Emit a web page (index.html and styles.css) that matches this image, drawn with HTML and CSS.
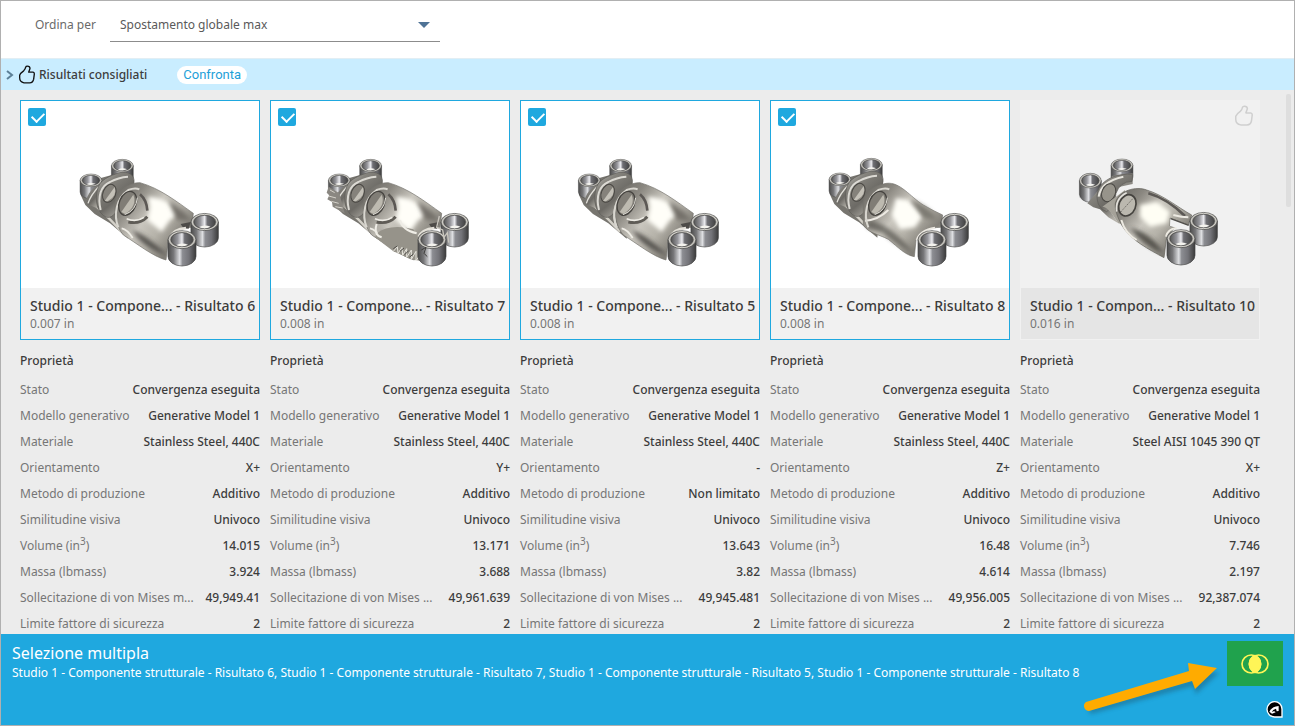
FILE: index.html
```
<!DOCTYPE html>
<html lang="it">
<head>
<meta charset="UTF-8">
<title>Risultati</title>
<link rel="stylesheet" href="styles.css">
</head>
<body>
<!-- shared shapes for the part previews -->
<svg class="defs" width="0" height="0" aria-hidden="true">
  <defs>
    <linearGradient id="side">
      <stop offset="0" stop-color="#4c4c4c"/><stop offset=".2" stop-color="#777779"/><stop offset=".42" stop-color="#dedfe2"/>
      <stop offset=".52" stop-color="#8c8d92"/><stop offset=".75" stop-color="#737378"/><stop offset="1" stop-color="#3b3b3b"/>
    </linearGradient>
    <linearGradient id="bore">
      <stop offset="0" stop-color="#555"/><stop offset=".3" stop-color="#96969b"/><stop offset=".5" stop-color="#ececf0"/>
      <stop offset=".62" stop-color="#6f6f74"/><stop offset="1" stop-color="#444"/>
    </linearGradient>
    <linearGradient id="metal" x1="0" y1=".1" x2="1" y2=".9">
      <stop offset="0" stop-color="#6c6a65"/><stop offset=".2" stop-color="#8b8881"/><stop offset=".42" stop-color="#c9c6be"/>
      <stop offset=".6" stop-color="#b5b2a9"/><stop offset=".8" stop-color="#827f78"/><stop offset="1" stop-color="#b9b6ae"/>
    </linearGradient>
    <linearGradient id="lobe" x1="0" y1="0" x2=".7" y2="1">
      <stop offset="0" stop-color="#c9c7c1"/><stop offset=".3" stop-color="#84827c"/><stop offset=".65" stop-color="#6c6a65"/><stop offset="1" stop-color="#b5b2aa"/>
    </linearGradient>
    <filter id="soft" x="-30%" y="-30%" width="160%" height="160%"><feGaussianBlur stdDeviation="7"/></filter>
    <filter id="soft2" x="-30%" y="-30%" width="160%" height="160%"><feGaussianBlur stdDeviation="2"/></filter>
    <g id="cup">
      <path d="M-42 0V50A42 29 0 0 0 42 50V0Z" fill="url(#side)" stroke="#444" stroke-width="2"/>
      <ellipse rx="42" ry="27" fill="#9b9994" stroke="#4a4a48" stroke-width="2"/>
      <ellipse rx="38" ry="24" fill="none" stroke="#d5d3cd" stroke-width="3"/>
      <ellipse rx="33" ry="21" fill="url(#bore)" stroke="#3e3e3e" stroke-width="2"/>
      <path d="M-17 16Q0 7 18 15Q0 24-17 16Z" fill="#f4f3ee"/>
    </g>
    <g id="rear">
      <use href="#cup" transform="translate(187 77) scale(.78 .7)"/>
      <path d="M62 128L62 165L76 195L104 222L150 250L205 296L222 130L216 105L155 105L120 115Z" fill="#77756f"/>
      <path d="M110 200L150 238L185 275" fill="none" stroke="#d3d0c8" stroke-width="7" filter="url(#soft2)"/>
      <use href="#cup" transform="translate(93 121) scale(.78 .7)"/>
      <path d="M76 190C82 160 98 142 124 130L118 208Z" fill="url(#lobe)"/>
      <path d="M84 190Q92 165 116 140" fill="none" stroke="#e2e0da" stroke-width="4"/>
      <path d="M112 150C118 118 150 108 178 98C205 92 225 105 222 128C220 148 185 160 175 190C172 215 160 235 140 232C110 220 105 180 112 150Z" fill="url(#lobe)" stroke="#5c5a56" stroke-width="2"/>
      <path d="M122 210C112 170 122 138 150 126Q175 112 204 110" fill="none" stroke="#dcdad4" stroke-width="6" filter="url(#soft2)"/>
      <ellipse cx="148" cy="160" rx="19" ry="28" transform="rotate(22 148 160)" fill="#85827b" stroke="#494743" stroke-width="3"/>
      <path d="M134 183L164 141Q173 168 143 184Z" fill="#c4c1b8"/>
    </g>
    <g id="eye">
      <path d="M175 262C160 225 168 175 205 150Q225 142 238 148" fill="none" stroke="#d9d7d0" stroke-width="6" filter="url(#soft2)"/>
      <ellipse cx="203" cy="190" rx="25" ry="37" transform="rotate(22 203 190)" fill="#807d76" stroke="#45433f" stroke-width="4"/>
      <path d="M184 216L220 164Q233 198 195 222Z" fill="#bdbab0"/>
      <path d="M194 224Q229 211 232 173" fill="none" stroke="#dfddd6" stroke-width="3"/>
    </g>
    <g id="fronts">
      <use href="#cup" transform="translate(434 246) scale(.98 .95)"/>
      <use href="#cup" transform="translate(366 299)"/>
    </g>
    <g id="body">
      <path d="M165 190C170 150 205 128 240 128C300 145 350 185 400 220L395 262C370 262 340 275 325 300L318 360C280 350 230 310 190 285C168 260 163 220 165 190Z" fill="url(#metal)" stroke="#74726d" stroke-width="2"/>
      <path d="M264 170Q330 175 360 220L330 240L305 275L262 240L270 205Z" fill="#fffef8" filter="url(#soft)"/>
      <path d="M215 270Q260 285 320 345Q250 325 215 270Z" fill="#3f3d3a" opacity=".8" filter="url(#soft)"/>
      <path d="M325 182Q370 205 392 242L350 240Z" fill="#74716a" filter="url(#soft)"/>
      <path d="M205 246Q240 253 262 230" fill="none" stroke="#5e5b56" stroke-width="9" filter="url(#soft2)"/>
      <path d="M200 236Q228 248 252 232M185 265Q202 268 218 294" fill="none" stroke="#eeece5" stroke-width="5" filter="url(#soft2)"/>
      <path d="M240 163Q260 180 262 212" fill="none" stroke="#5c5954" stroke-width="8" filter="url(#soft2)"/>
      <path d="M362 252L392 246L386 266L370 264Z" fill="#4d4b48"/>
      <path d="M328 294Q340 267 378 264" fill="none" stroke="#e3e0d8" stroke-width="7" filter="url(#soft2)"/>
    </g>
    <path id="thumb" d="M83 199Q91 199 91 206L87 217H100Q104 218 104 222L102 238Q100 249 90 249H73Q60 247 60 234V226Q62 220 72 213Q77 208 78 202Q79 199 83 199Z" fill="none" stroke="currentColor" stroke-width="4" stroke-linejoin="round"/>
  </defs>
</svg>

<header class="topbar">
  <label for="sort">Ordina per</label>
  <div class="select">
    <select id="sort"><option>Spostamento globale max</option></select>
    <svg class="arrow" width="12" height="6" viewBox="0 0 12 6"><path d="M0 0H12L6 6Z" fill="#4f7396"/></svg>
  </div>
</header>

<div class="banner">
  <svg class="chevron" width="8" height="12" viewBox="0 0 8 12"><path d="M1 2L6 6L1 10" fill="none" stroke="#5b7f96" stroke-width="2"/></svg>
  <svg class="thumb" width="16" height="19" viewBox="58 196 48 56"><use href="#thumb"/></svg>
  <h2>Risultati consigliati</h2>
  <button class="compare" type="button">Confronta</button>
</div>

<main class="results">
  <section class="result">
    <div class="card selected">
      <input type="checkbox" aria-label="Risultato 6" checked>
      <svg class="part" viewBox="-117 -117 714 561">
        <use href="#rear"/><use href="#body"/><use href="#eye"/><use href="#fronts"/>
      </svg>
      <div class="caption">
        <h3>Studio 1 - Compone... - Risultato 6</h3>
        <p>0.007 in</p>
      </div>
    </div>
    <h4>Proprietà</h4>
    <table>
      <tr><th>Stato</th><td>Convergenza eseguita</td></tr>
      <tr><th>Modello generativo</th><td>Generative Model 1</td></tr>
      <tr><th>Materiale</th><td>Stainless Steel, 440C</td></tr>
      <tr><th>Orientamento</th><td>X+</td></tr>
      <tr><th>Metodo di produzione</th><td>Additivo</td></tr>
      <tr><th>Similitudine visiva</th><td>Univoco</td></tr>
      <tr><th>Volume (in<sup>3</sup>)</th><td>14.015</td></tr>
      <tr><th>Massa (lbmass)</th><td>3.924</td></tr>
      <tr><th>Sollecitazione di von Mises m...</th><td>49,949.41</td></tr>
      <tr><th>Limite fattore di sicurezza</th><td>2</td></tr>
    </table>
  </section>

  <section class="result">
    <div class="card selected">
      <input type="checkbox" aria-label="Risultato 7" checked>
      <svg class="part" viewBox="-117 -117 714 561">
        <g transform="translate(-5 0)"><use href="#rear"/></g>
        <path d="M56 140L50 158L58 166L52 178L66 186L68 200L92 214L104 220L88 160Z" fill="#8a8781"/>
        <path d="M60 150L74 158M56 168L78 174M64 184L86 190M76 200L98 204" stroke="#d6d3cb" stroke-width="3"/>
        <g transform="translate(-5 0)"><use href="#body"/><use href="#eye"/></g>
        <path d="M200 280Q240 250 310 268L330 300L328 362L300 356L250 334L195 292Z" fill="#96938a" filter="url(#soft2)"/>
        <path d="M250 334L262 320L264 340L276 322L278 346L290 326L290 352L304 330L304 358L318 334L318 362L334 340" fill="none" stroke="#e6e4dc" stroke-width="3"/>
        <path d="M250 326L262 318M270 334L282 324M284 344L296 332M298 352L310 342" stroke="#4f4d49" stroke-width="3"/>
        <path d="M200 252Q190 285 215 292M270 240Q276 270 320 280" fill="none" stroke="#efede6" stroke-width="6" filter="url(#soft2)"/>
        <use href="#fronts"/>
        <path d="M388 228L380 262L398 270L402 292L412 278L416 308" fill="none" stroke="#c9c6be" stroke-width="4"/>
        <path d="M334 330L348 322L342 340L352 350" fill="none" stroke="#3e3d3b" stroke-width="3"/>
      </svg>
      <div class="caption">
        <h3>Studio 1 - Compone... - Risultato 7</h3>
        <p>0.008 in</p>
      </div>
    </div>
    <h4>Proprietà</h4>
    <table>
      <tr><th>Stato</th><td>Convergenza eseguita</td></tr>
      <tr><th>Modello generativo</th><td>Generative Model 1</td></tr>
      <tr><th>Materiale</th><td>Stainless Steel, 440C</td></tr>
      <tr><th>Orientamento</th><td>Y+</td></tr>
      <tr><th>Metodo di produzione</th><td>Additivo</td></tr>
      <tr><th>Similitudine visiva</th><td>Univoco</td></tr>
      <tr><th>Volume (in<sup>3</sup>)</th><td>13.171</td></tr>
      <tr><th>Massa (lbmass)</th><td>3.688</td></tr>
      <tr><th>Sollecitazione di von Mises ...</th><td>49,961.639</td></tr>
      <tr><th>Limite fattore di sicurezza</th><td>2</td></tr>
    </table>
  </section>

  <section class="result">
    <div class="card selected">
      <input type="checkbox" aria-label="Risultato 5" checked>
      <svg class="part" viewBox="-117 -117 714 561">
        <g transform="translate(-5 0)"><use href="#rear"/><use href="#eye"/></g>
        <use href="#body"/>
        <g transform="translate(-5 0)"><use href="#eye"/></g>
        <use href="#fronts"/>
      </svg>
      <div class="caption">
        <h3>Studio 1 - Compone... - Risultato 5</h3>
        <p>0.008 in</p>
      </div>
    </div>
    <h4>Proprietà</h4>
    <table>
      <tr><th>Stato</th><td>Convergenza eseguita</td></tr>
      <tr><th>Modello generativo</th><td>Generative Model 1</td></tr>
      <tr><th>Materiale</th><td>Stainless Steel, 440C</td></tr>
      <tr><th>Orientamento</th><td>-</td></tr>
      <tr><th>Metodo di produzione</th><td>Non limitato</td></tr>
      <tr><th>Similitudine visiva</th><td>Univoco</td></tr>
      <tr><th>Volume (in<sup>3</sup>)</th><td>13.643</td></tr>
      <tr><th>Massa (lbmass)</th><td>3.82</td></tr>
      <tr><th>Sollecitazione di von Mises ...</th><td>49,945.481</td></tr>
      <tr><th>Limite fattore di sicurezza</th><td>2</td></tr>
    </table>
  </section>

  <section class="result">
    <div class="card selected">
      <input type="checkbox" aria-label="Risultato 8" checked>
      <svg class="part" viewBox="-117 -117 714 561">
        <g transform="translate(-3 -3)"><use href="#rear"/></g>
        <g transform="translate(30 0)">
          <path d="M130 190C130 160 160 135 200 130C240 125 270 170 310 195Q345 215 368 225L362 262C330 262 300 275 288 300L283 350C255 345 235 322 205 298C175 282 145 280 130 255Z" fill="url(#metal)" stroke="#74726d" stroke-width="2"/>
          <path d="M228 175L265 180L310 225L285 262L240 268L215 225Z" fill="#fffef8" filter="url(#soft)"/>
          <path d="M145 240Q200 250 255 310L280 340Q220 310 190 280L140 262Z" fill="#55524d" opacity=".7" filter="url(#soft)"/>
          <path d="M270 178Q330 200 350 240L310 235Z" fill="#7d7a72" filter="url(#soft)"/>
          <path d="M135 242Q175 240 205 210M290 300Q300 270 345 263" fill="none" stroke="#edeae3" stroke-width="6" filter="url(#soft2)"/>
        </g>
        <use href="#eye"/>
        <use href="#fronts"/>
      </svg>
      <div class="caption">
        <h3>Studio 1 - Compone... - Risultato 8</h3>
        <p>0.008 in</p>
      </div>
    </div>
    <h4>Proprietà</h4>
    <table>
      <tr><th>Stato</th><td>Convergenza eseguita</td></tr>
      <tr><th>Modello generativo</th><td>Generative Model 1</td></tr>
      <tr><th>Materiale</th><td>Stainless Steel, 440C</td></tr>
      <tr><th>Orientamento</th><td>Z+</td></tr>
      <tr><th>Metodo di produzione</th><td>Additivo</td></tr>
      <tr><th>Similitudine visiva</th><td>Univoco</td></tr>
      <tr><th>Volume (in<sup>3</sup>)</th><td>16.48</td></tr>
      <tr><th>Massa (lbmass)</th><td>4.614</td></tr>
      <tr><th>Sollecitazione di von Mises ...</th><td>49,956.005</td></tr>
      <tr><th>Limite fattore di sicurezza</th><td>2</td></tr>
    </table>
  </section>

  <section class="result">
    <div class="card">
      <svg class="like" width="18" height="21" viewBox="58 196 48 56"><use href="#thumb"/></svg>
      <svg class="part" viewBox="-117 -117 714 561">
        <g transform="translate(-150 -150)">
          <use href="#cup" transform="translate(336 226) scale(.78 .7)"/>
          <path d="M304 258L368 250V282L330 290Z" fill="#8b8983"/>
          <use href="#cup" transform="translate(241 272) scale(.78 .82)"/>
          <path d="M232 340L274 290L300 362L325 400L295 382L270 358L250 352Z" fill="url(#lobe)"/>
          <path d="M262 330C255 290 290 262 330 255Q355 250 368 254L366 274Q330 275 318 310L312 345L290 365Q265 355 262 330Z" fill="url(#lobe)" stroke="#5c5a56" stroke-width="2"/>
          <path d="M266 320Q272 275 340 260" fill="none" stroke="#e8e6df" stroke-width="6" filter="url(#soft2)"/>
          <ellipse cx="296" cy="308" rx="20" ry="28" transform="rotate(22 296 308)" fill="#97948b" stroke="#494743" stroke-width="3"/>
          <path d="M277 350Q295 350 325 400L345 405L345 300L318 320Z" fill="#a5a299"/>
          <path d="M316 340C325 300 380 288 410 300C460 315 500 350 545 375L535 405L480 384L480 408L495 412L470 440L462 503C420 480 360 450 335 405C322 380 314 360 316 340Z" fill="url(#metal)" stroke="#62605b" stroke-width="2"/>
          <path d="M390 345L440 335L480 365L470 400L420 410L390 380Z" fill="#fffef4" filter="url(#soft)"/>
          <path d="M360 415Q420 425 460 490Q400 470 360 415Z" fill="#3f3d39" opacity=".8" filter="url(#soft)"/>
          <path d="M415 310Q470 325 525 378" fill="none" stroke="#5c5954" stroke-width="8" filter="url(#soft2)"/>
          <path d="M334 390Q345 430 380 450M468 440Q472 418 500 413M490 375Q515 382 535 382" fill="none" stroke="#edeae2" stroke-width="6" filter="url(#soft2)"/>
          <path d="M482 386L536 406L494 412L480 408Z" fill="#f1f1f1"/>
          <path d="M482 386L536 406" stroke="#4f4d49" stroke-width="4"/>
          <ellipse cx="352" cy="346" rx="25" ry="33" transform="rotate(22 352 346)" fill="#bbb8af" stroke="#45433f" stroke-width="5"/>
          <path d="M332 366L372 322" stroke="#45433f" stroke-width="2" stroke-dasharray="4 3"/>
          <path d="M320 365Q315 325 350 308" fill="none" stroke="#e4e2dc" stroke-width="5"/>
        </g>
        <g transform="translate(-3 -3)"><use href="#fronts"/></g>
      </svg>
      <div class="caption">
        <h3>Studio 1 - Compon... - Risultato 10</h3>
        <p>0.016 in</p>
      </div>
    </div>
    <h4>Proprietà</h4>
    <table>
      <tr><th>Stato</th><td>Convergenza eseguita</td></tr>
      <tr><th>Modello generativo</th><td>Generative Model 1</td></tr>
      <tr><th>Materiale</th><td>Steel AISI 1045 390 QT</td></tr>
      <tr><th>Orientamento</th><td>X+</td></tr>
      <tr><th>Metodo di produzione</th><td>Additivo</td></tr>
      <tr><th>Similitudine visiva</th><td>Univoco</td></tr>
      <tr><th>Volume (in<sup>3</sup>)</th><td>7.746</td></tr>
      <tr><th>Massa (lbmass)</th><td>2.197</td></tr>
      <tr><th>Sollecitazione di von Mises ...</th><td>92,387.074</td></tr>
      <tr><th>Limite fattore di sicurezza</th><td>2</td></tr>
    </table>
  </section>
  <div class="scrollbar"></div>
</main>

<footer class="selection">
  <div class="summary">
    <h2>Selezione multipla</h2>
    <p>Studio 1 - Componente strutturale - Risultato 6, Studio 1 - Componente strutturale - Risultato 7, Studio 1 - Componente strutturale - Risultato 5, Studio 1 - Componente strutturale - Risultato 8</p>
  </div>
  <svg class="pointer" width="144" height="60" viewBox="0 0 144 60">
    <path d="M9 44L112 15L108 4L138 9L115 30L112 22L10 50A4 4 0 0 1 9 44Z" fill="#1b4152" opacity=".35" transform="translate(2 4)" filter="url(#soft2)"/>
    <path d="M7 42L110 11L109 3L138 8L116 29L113 21L10 51A5 5 0 0 1 7 42Z" fill="#ffab00"/>
  </svg>
  <div class="actions">
    <button class="merge" type="button" aria-label="Confronta">
      <svg width="28" height="20" viewBox="0 0 84 60" fill="none" stroke="#fff557" stroke-width="5">
        <ellipse cx="31" cy="30" rx="28" ry="27"/><ellipse cx="53" cy="30" rx="28" ry="27"/>
        <path d="M42 5C64 15 64 45 42 55C20 45 20 15 42 5Z" fill="#fff557"/>
      </svg>
    </button>
    <svg class="logo" width="17" height="17" viewBox="0 0 51 51">
      <path d="M26 2A23 23 0 1 0 26 48H48V24A22 22 0 0 0 26 2Z" fill="#000" stroke="#fff" stroke-width="4"/>
      <path d="M10 32Q18 16 38 15V30L32 31L30 23Q20 25 17 34Q25 28 29 34L18 38Z" fill="#fff"/>
    </svg>
  </div>
</footer>
</body>
</html>
```
FILE: styles.css
```
* {
  box-sizing: border-box;
}
body {
  display: flex;
  flex-direction: column;
  height: 100vh;
  margin: 0;
  border: 1px solid #b0b0b0;
  background-color: #ececec;
  color: #3c3c3c;
  font-family: "Noto Sans", sans-serif;
  font-size: 12px;
  line-height: 18px;
  overflow: hidden;
}
h2, h3, h4, p {
  margin: 0;
}
button, select {
  font-family: inherit;
}
.defs {
  position: absolute;
}
.topbar {
  display: flex;
  align-items: center;
  gap: 14px;
  flex: none;
  height: 57px;
  padding: 0 34px 10px;
  background-color: #fff;
  color: #6a6a6a;
}
.select {
  display: flex;
  align-items: center;
  position: relative;
  width: 330px;
}
.select select {
  width: 100%;
  height: 34px;
  padding: 0 10px;
  border: 0;
  border-bottom: 1px solid #8c8c8c;
  background: none;
  color: #5a5a5a;
  font-size: 12px;
  appearance: none;
}
.arrow {
  position: absolute;
  right: 10px;
}
.banner {
  display: flex;
  align-items: center;
  flex: none;
  height: 32px;
  padding-left: 5px;
  border-top: 1px solid #e2eef4;
  background-color: #c9edff;
}
.chevron {
  margin-right: 5px;
}
.thumb {
  margin-right: 4px;
  color: #111;
}
.banner h2 {
  font-size: 12px;
  font-weight: 500;
}
.compare {
  height: 18px;
  margin-left: 30px;
  padding: 0 6px;
  border: 0;
  border-radius: 9px;
  background-color: #fff;
  color: #1ea0d8;
  font-family: Roboto, sans-serif;
  font-size: 13px;
  line-height: 18px;
}
.results {
  display: grid;
  grid-template-columns: repeat(auto-fill, 240px);
  align-content: start;
  gap: 10px;
  flex: 1;
  position: relative;
  min-height: 0;
  padding: 10px 19px 0;
  overflow: hidden;
}
.card {
  position: relative;
  border: 1px solid #f1f1f1;
  background-color: #f1f1f1;
}
.card.selected {
  border-color: #1fa8df;
  background-color: #fff;
}
.card input {
  position: absolute;
  top: 7px;
  left: 7px;
  width: 18px;
  height: 18px;
  margin: 0;
  border-radius: 2px;
  background-color: #1fa8df;
  appearance: none;
}
.card input::after {
  content: "";
  position: absolute;
  top: 4px;
  left: 4px;
  width: 10px;
  height: 6px;
  border: solid #fff;
  border-width: 0 0 2px 2px;
  transform: rotate(-45deg);
}
.like {
  position: absolute;
  top: 4px;
  right: 6px;
  color: #cfcfcf;
}
.part {
  display: block;
  width: 100%;
}
.caption {
  height: 51px;
  padding: 9px 0 0 9px;
  background-color: #e5e5e5;
}
.selected .caption {
  background-color: #f1f1f1;
}
.caption h3 {
  font-size: 14px;
  font-weight: 500;
  line-height: 18px;
  white-space: nowrap;
}
.caption p {
  color: #767676;
}
h4 {
  padding-top: 12px;
  font-weight: 500;
}
table {
  display: block;
  margin-top: 7px;
}
tbody {
  display: block;
}
tr {
  display: flex;
  justify-content: space-between;
  line-height: 26px;
  white-space: nowrap;
}
th, td {
  padding: 0;
}
th {
  color: #767676;
  font-weight: 400;
}
td {
  font-weight: 500;
}
sup {
  font-size: 10px;
  line-height: 0;
}
.scrollbar {
  position: absolute;
  top: 4px;
  right: 3px;
  width: 5px;
  height: 113px;
  border-radius: 2px;
  background-color: #dedede;
}
.selection {
  display: flex;
  justify-content: space-between;
  flex: none;
  position: relative;
  height: 91px;
  padding: 7px 11px;
  background-color: #1fa8df;
  color: #fff;
}
.summary {
  padding-top: 2px;
}
.summary h2 {
  margin-bottom: 1px;
  font-size: 16px;
  font-weight: 400;
  line-height: 20px;
}
.pointer {
  position: absolute;
  right: 71px;
  bottom: 5px;
}
.actions {
  display: flex;
  flex-direction: column;
  align-items: flex-end;
  justify-content: space-between;
}
.merge {
  display: flex;
  align-items: center;
  justify-content: center;
  width: 56px;
  height: 45px;
  padding: 0;
  border: 0;
  background-color: #20a24d;
}
```
